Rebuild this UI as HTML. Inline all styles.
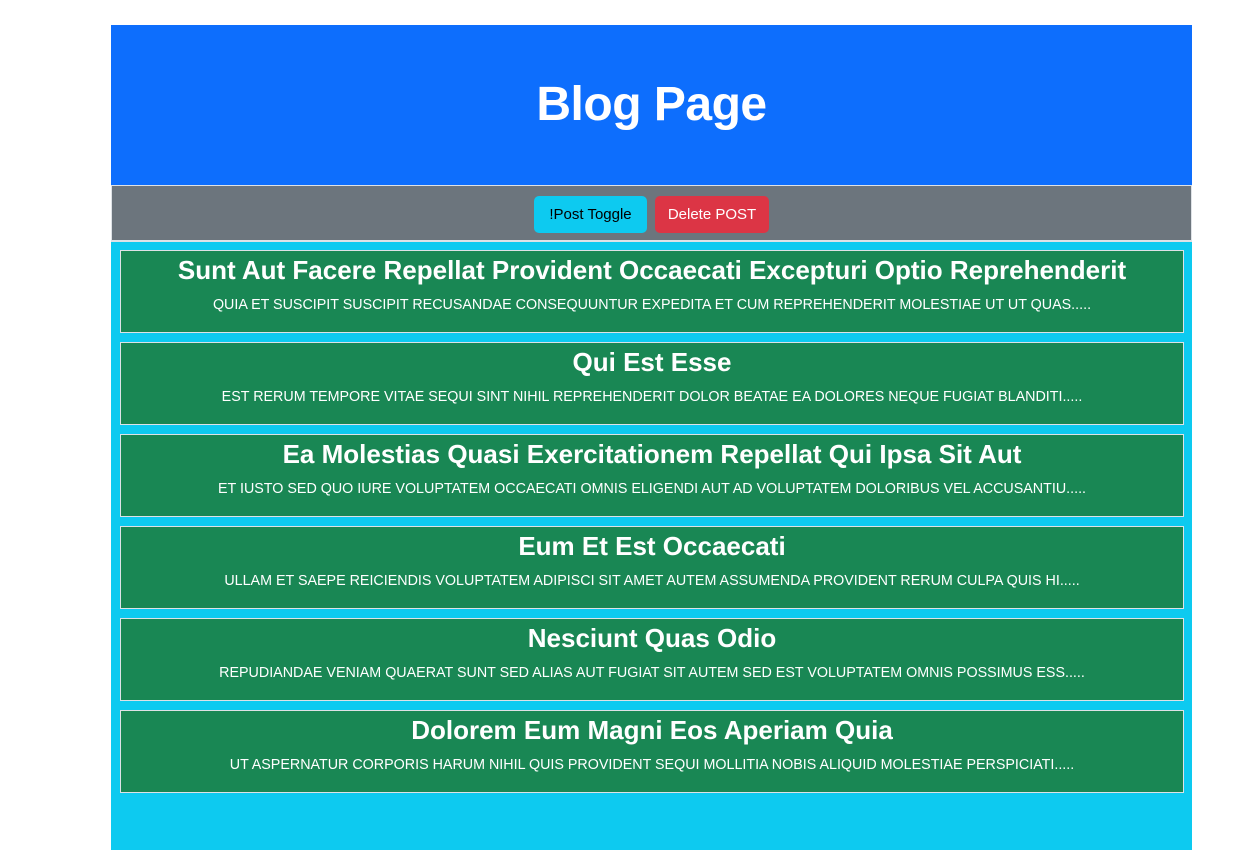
<!DOCTYPE html>
<html><head><style>
html,body{margin:0;background:#fff;font-family:"Liberation Sans",sans-serif;width:1260px;height:758px;overflow:hidden}
.wrap{position:absolute;left:111px;top:25px;width:1081px}
.hdr{height:160px;background:#0d6efd;color:#fff;text-align:center;font-weight:bold;font-size:48px;line-height:160px;letter-spacing:-0.5px}
.bar{height:55px;background:#6c757d;border:1px solid #dee2e6;border-bottom:none;box-sizing:border-box;display:flex;justify-content:center;align-items:center;gap:8px;padding-top:2px}
.btn{height:37px;border-radius:5px;font-size:15px;line-height:37px;box-sizing:border-box}
.b1{background:#0dcaf0;color:#000;width:113px;text-align:center}
.b2{background:#dc3545;color:#fff;width:114px;text-align:center}
.list{background:#0dcaf0;border-top:2px solid #dee2e6;padding:8px 8px 0 9px;height:600px}
.card{background:#198754;border:1px solid #dee2e6;height:81px;margin-bottom:9px;color:#fff;text-align:center}
.t{font-size:26px;font-weight:bold;margin-top:4px;line-height:30px}
.s{font-size:14.3px;margin-top:12px;text-transform:uppercase}
</style></head><body>
<div class="wrap">
<div class="hdr">Blog Page</div>
<div class="bar"><div class="btn b1">!Post Toggle</div><div class="btn b2">Delete POST</div></div>
<div class="list">
<div class="card"><div class="t">Sunt Aut Facere Repellat Provident Occaecati Excepturi Optio Reprehenderit</div><div class="s">quia et suscipit suscipit recusandae consequuntur expedita et cum reprehenderit molestiae ut ut quas.....</div></div>
<div class="card"><div class="t">Qui Est Esse</div><div class="s">est rerum tempore vitae sequi sint nihil reprehenderit dolor beatae ea dolores neque fugiat blanditi.....</div></div>
<div class="card"><div class="t">Ea Molestias Quasi Exercitationem Repellat Qui Ipsa Sit Aut</div><div class="s">et iusto sed quo iure voluptatem occaecati omnis eligendi aut ad voluptatem doloribus vel accusantiu.....</div></div>
<div class="card"><div class="t">Eum Et Est Occaecati</div><div class="s">ullam et saepe reiciendis voluptatem adipisci sit amet autem assumenda provident rerum culpa quis hi.....</div></div>
<div class="card"><div class="t">Nesciunt Quas Odio</div><div class="s">repudiandae veniam quaerat sunt sed alias aut fugiat sit autem sed est voluptatem omnis possimus ess.....</div></div>
<div class="card"><div class="t">Dolorem Eum Magni Eos Aperiam Quia</div><div class="s">ut aspernatur corporis harum nihil quis provident sequi mollitia nobis aliquid molestiae perspiciati.....</div></div>
</div>
</div>
</body></html>
